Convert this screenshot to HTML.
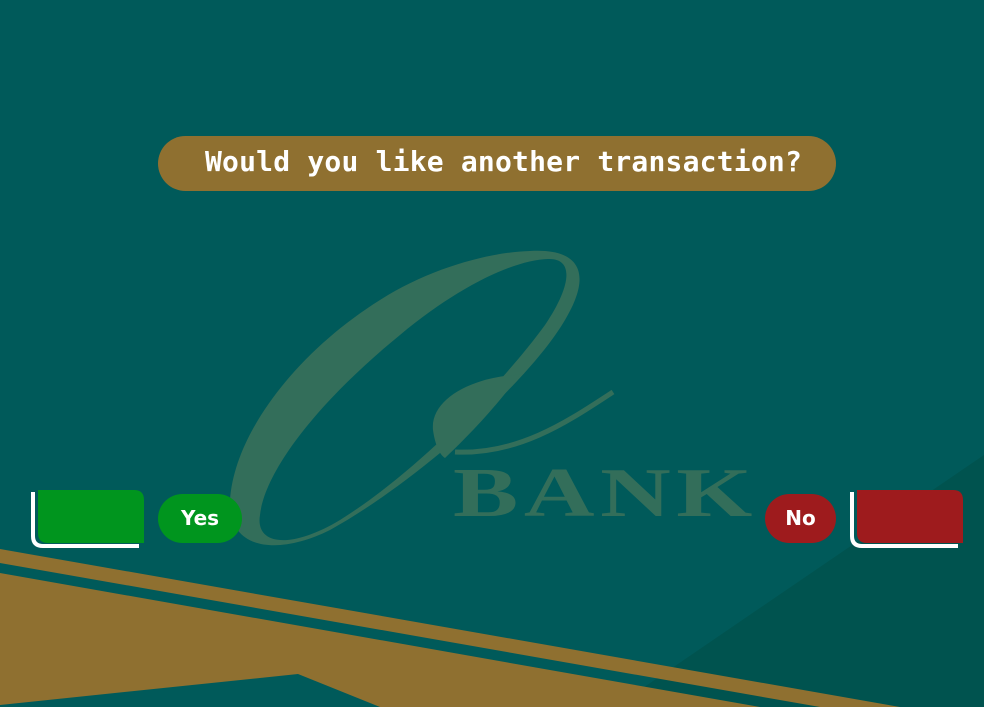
<!DOCTYPE html><html><head><style>
body{margin:0;width:984px;height:707px;overflow:hidden;background:#005a5a;font-family:"DejaVu Sans Mono","Liberation Mono",monospace}
.t{position:absolute;left:158px;top:136px;width:678px;height:55px;border-radius:28px;background:#8f7030;color:#fff;font-weight:bold;font-size:28px;line-height:52px;letter-spacing:0.2px;padding-left:47px;box-sizing:border-box;white-space:nowrap}
.p{position:absolute;top:494px;height:49px;border-radius:25px;color:#fff;font-weight:bold;font-size:20px;line-height:49px;text-align:center;font-family:"DejaVu Sans",sans-serif}
</style></head><body>
<svg width="984" height="707" style="position:absolute;left:0;top:0">
<polygon points="984,455 984,707 615,707" fill="#00534f"/>
<path fill-rule="evenodd" fill="#336e5a" d="M530,251 C582,248 592,275 565,320 C530,380 420,480 330,530 C280,555 228,552 230,500 C235,430 300,350 380,300 C430,268 490,252 530,251 Z M548,259 C574,258 572,285 545,325 C505,380 420,470 340,520 C290,550 255,545 260,515 C265,470 320,400 400,335 C460,285 515,260 548,259 Z"/>
<path fill="#336e5a" d="M515,375 C470,378 430,400 433,430 C435,445 440,455 445,458 C480,425 505,395 520,374 Z"/>
<path fill="none" stroke="#336e5a" stroke-width="5" d="M455,452 C520,455 570,420 613,392"/>
<text x="453" y="516" font-family="Liberation Serif,serif" font-weight="bold" font-size="70" fill="#336e5a" textLength="305" lengthAdjust="spacingAndGlyphs" letter-spacing="4">BANK</text>
<polygon points="0,549 900,707 820,707 0,563" fill="#8f7030"/>
<polygon points="0,573 760,707 380,707 298,674 0,705" fill="#8f7030"/>
<path d="M33,492 V536 Q33,546 43,546 H139" stroke="#fff" stroke-width="4" fill="none"/>
<path d="M38,490 H134 Q144,490 144,500 V543 H48 Q38,543 38,533 Z" fill="#00951e"/>
<path d="M852,492 V536 Q852,546 862,546 H958" stroke="#fff" stroke-width="4" fill="none"/>
<path d="M857,490 H953 Q963,490 963,500 V543 H867 Q857,543 857,533 Z" fill="#9e1b1d"/>
</svg>
<div class="t">Would you like another transaction?</div>
<div class="p" style="left:158px;width:84px;background:#00951e">Yes</div>
<div class="p" style="left:765px;width:71px;background:#9e1b1d">No</div>
</body></html>
